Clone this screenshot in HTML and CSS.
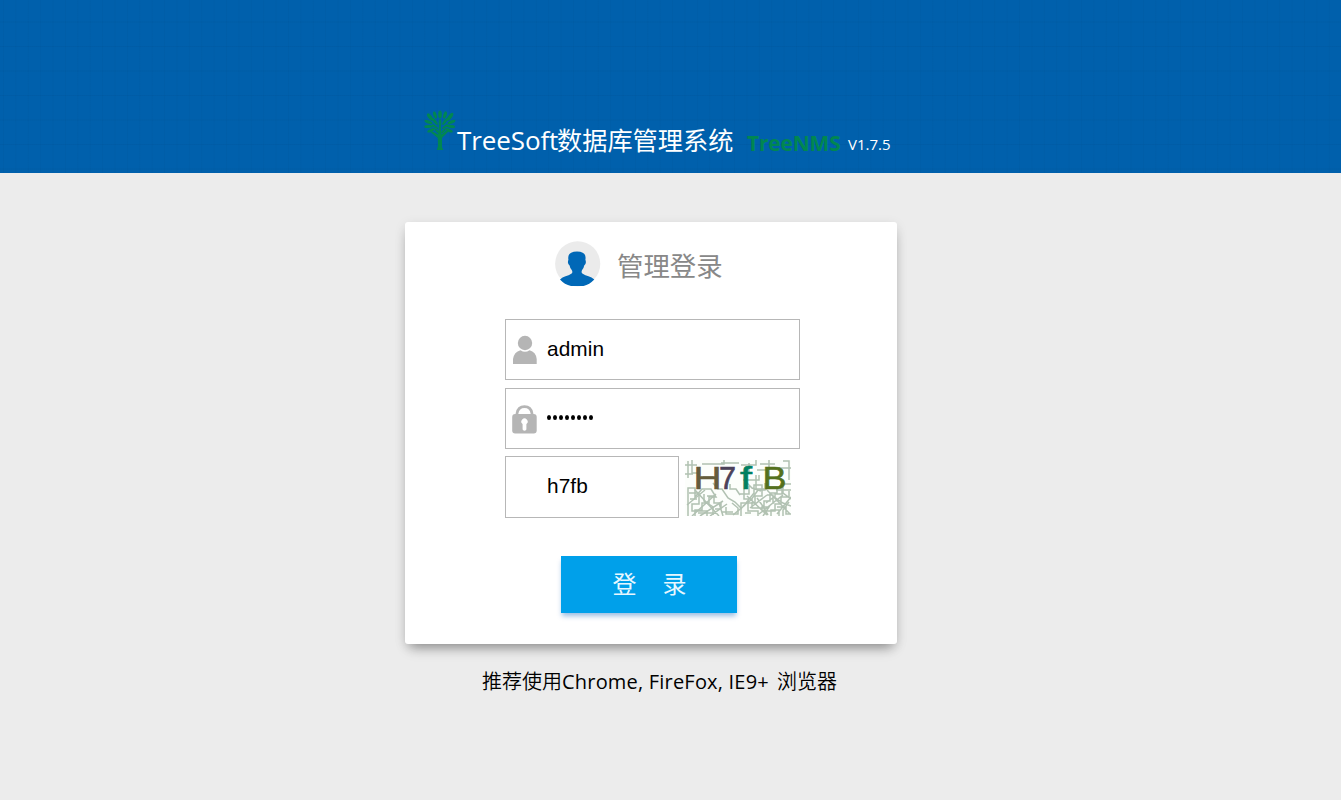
FILE: index.html
```html
<!DOCTYPE html>
<html lang="zh-CN">
<head>
<meta charset="utf-8">
<title>TreeSoft数据库管理系统</title>
<link rel="stylesheet" href="styles.css">
</head>
<body>
<header class="banner">
  <svg class="tree" viewBox="0 0 34 42" fill="#008751">
    <path d="M13.8 40 L15 36 L14.8 28 L8 22.5 L9 21.3 L15.2 24.5 L16 15 H17.8 L18.3 24.5 L24 20.3 L25.4 21.6 L19 28 L19 37 L20.2 40Z"/>
    <g>
      <ellipse cx="17" cy="4.5" rx="1.8" ry="4"/>
      <ellipse cx="12" cy="5" rx="1.6" ry="3.8" transform="rotate(-18 12 5)"/>
      <ellipse cx="22" cy="5" rx="1.6" ry="3.8" transform="rotate(18 22 5)"/>
      <ellipse cx="7" cy="7" rx="1.9" ry="4.4" transform="rotate(-35 7 7)"/>
      <ellipse cx="27" cy="6.8" rx="1.9" ry="4.8" transform="rotate(38 27 6.8)"/>
      <ellipse cx="5.5" cy="12" rx="1.5" ry="4.2" transform="rotate(-70 5.5 12)"/>
      <ellipse cx="28.5" cy="12" rx="1.5" ry="4.2" transform="rotate(68 28.5 12)"/>
      <ellipse cx="5.5" cy="16.5" rx="1.5" ry="4.3" transform="rotate(88 5.5 16.5)"/>
      <ellipse cx="28" cy="16.5" rx="1.5" ry="4.3" transform="rotate(-82 28 16.5)"/>
      <ellipse cx="8" cy="20.3" rx="1.5" ry="4" transform="rotate(65 8 20.3)"/>
      <ellipse cx="26" cy="20.3" rx="1.5" ry="4" transform="rotate(-65 26 20.3)"/>
      <ellipse cx="12" cy="11.5" rx="1.4" ry="4.2" transform="rotate(-35 12 11.5)"/>
      <ellipse cx="22" cy="11.5" rx="1.4" ry="4.2" transform="rotate(35 22 11.5)"/>
      <ellipse cx="17" cy="13" rx="1.3" ry="4"/>
      <ellipse cx="12" cy="16.7" rx="1.1" ry="3.6" transform="rotate(-55 12 16.7)"/>
      <ellipse cx="22" cy="16.7" rx="1.1" ry="3.6" transform="rotate(55 22 16.7)"/>
      <ellipse cx="14" cy="21" rx="1.1" ry="3" transform="rotate(-45 14 21)"/>
      <ellipse cx="20.4" cy="21" rx="1.1" ry="3" transform="rotate(45 20.4 21)"/>
    </g>
  </svg>
  <h1 class="title"><span class="title-latin">TreeSoft</span><span class="title-cjk">数据库管理系统</span></h1>
  <span class="product">TreeNMS</span>
  <span class="version">V1.7.5</span>
</header>
<main class="page">
  <form class="card">
    <div class="heading">
      <svg class="avatar" viewBox="0 0 46 46">
        <circle cx="22.7" cy="22.8" r="22.6" fill="#ebebeb"/>
        <path d="M5 38.4 C8 35.6 13 35 16.3 32.8 Q18.4 31.4 16.4 28.6 Q15 27 14.6 24.6 Q12 22.4 13.4 18.8 Q12 10.4 22 10.4 Q31.8 10.4 30.4 18.8 Q31.8 22.4 29.2 24.6 Q28.8 27 27.4 28.6 Q25.6 31.4 27.7 32.8 C31 35 36 35.6 39.3 38.4 Q34.5 43.4 28.5 45 H16 Q9.5 43.4 5 38.4Z" fill="#0068b7"/>
      </svg>
      <h2 class="heading-text">管理登录</h2>
    </div>
    <label class="field">
      <svg class="field-icon" viewBox="0 0 26 30" fill="#b5b5b5">
        <circle cx="13" cy="8" r="7.2"/>
        <path d="M1 29 V24 Q2 17 8.5 15.2 Q13 18.2 17.5 15.2 Q24 17 24.7 24 V29Z"/>
      </svg>
      <input class="input" type="text" value="admin">
    </label>
    <label class="field">
      <svg class="field-icon" viewBox="0 0 26 30">
        <path d="M5 12 V9.5 Q6 2.6 12.5 2.6 Q19 2.6 20 9.5 V12" fill="none" stroke="#b5b5b5" stroke-width="2.7"/>
        <rect x="0.2" y="10" width="24.5" height="19.5" rx="3" fill="#b5b5b5"/>
        <path d="M10.6 20 A3.1 3.1 0 1 1 14.4 20 V25.5 Q12.5 28 10.6 25.5Z" fill="#fff"/>
      </svg>
      <span class="dots"><i></i><i></i><i></i><i></i><i></i><i></i><i></i><i></i></span>
    </label>
    <div class="code-row">
      <label class="field field-code"><input class="input" type="text" value="h7fb"></label>
      <svg class="captcha" viewBox="0 0 106 56">
        <rect width="106" height="56" fill="#fcfefb"/>
        <g class="noise">
          <path d="M0 5H12M3 1V18M7 0V13H14M0 14H8M18 17H28M17 4H39V0M36 3H54M56 5H71V0M72 10H84V20M84 0V14M75 4H90M98 1H104V20M94 8H106M95 24H106M58 20H74V15M71 15V29H82M64 3V14"/>
          <path d="M3 56V28H10V37L17 29H26L31 37H24V43H17V50H10V56M4 33H14V44H7V51H22V56M5 39H12M19 34V41L28 47V55M22 36H29V43H36V49H30M34 43L38 56M41 47V54H53V48L47 43M13 53H30M37 52H48"/>
          <path d="M28 23L33 29H37L43 38L50 42L57 49M45 24V29H51L55 35M2 45L20 30M7 56L31 34M15 56L38 41M25 56L42 44M10 30L34 56M48 55L60 45"/>
          <path d="M56 56V43H61L69 33V25H77V36H70V43H63V51H73V56M55 34H64V26M59 29V39H67V48H79V41H85V33H92V26M58 46L66 40L73 30H80V23M78 56L84 47H77V51H90V44H96V37H104V31M82 35H88V44M86 56V50H94V56M92 47H101V54H106M83 27H97V34H90V39M98 24V33L106 39M81 43L89 37L98 43L106 46M72 38L77 45L83 55M98 56V50L104 42M66 53H60M91 30H106M61 22L67 28L76 31M62 36L82 55M82 30L105 54M74 54L98 35M92 54L106 37M65 48L82 35"/>
        </g>
        <g class="captcha-text">
          <text x="8.5" y="29" fill="#645c3b" stroke="#645c3b" textLength="28" lengthAdjust="spacingAndGlyphs">H</text>
          <text x="34" y="29" fill="#4b4259" stroke="#4b4259" textLength="17" lengthAdjust="spacingAndGlyphs">7</text>
          <text x="55" y="29" fill="#008060" stroke="#008060" textLength="12" lengthAdjust="spacingAndGlyphs">f</text>
          <text x="77.5" y="29" fill="#54711c" stroke="#54711c" textLength="24" lengthAdjust="spacingAndGlyphs">B</text>
        </g>
      </svg>
    </div>
    <button class="submit" type="button"><span>登</span><span>录</span></button>
  </form>
  <p class="hint"><span class="hint-cjk">推荐使用</span><span class="hint-latin">Chrome, FireFox, IE9+</span><span class="hint-cjk">浏览器</span></p>
</main>
</body>
</html>
```

FILE: styles.css
```css
* { box-sizing: border-box; }
body {
  margin: 0;
  height: 800px;
  overflow: hidden;
  background: #ececec;
  font-family: "Open Sans", "Noto Sans CJK SC", sans-serif;
}
.banner {
  height: 173px;
  padding: 110px 0 0 423px;
  display: flex;
  align-items: flex-start;
  color: #fff;
  background-color: #0060ac;
  background-image:
    linear-gradient(rgba(0, 60, 110, .09) 1px, transparent 1px),
    linear-gradient(90deg, rgba(0, 60, 110, .06) 1px, transparent 1px);
  background-size: 25px 24.5px, 12.4px 12.4px;
  background-position: 3px -3px;
}
.tree { width: 34px; height: 42px; flex: none; }
.title {
  margin: 12px 0 0;
  display: flex;
  font-size: 26px;
  line-height: 36px;
  font-weight: 400;
  white-space: nowrap;
}
.title-latin { width: 100px; letter-spacing: -.1px; }
.title-cjk { width: 176px; font-size: 25.2px; }
.product {
  width: 101px;
  margin: 19px 0 0 14px;
  font-size: 21px;
  line-height: 28px;
  font-weight: 700;
  letter-spacing: -.2px;
  color: #008751;
}
.version { margin-top: 23px; font-size: 15px; line-height: 22px; }
.page { display: flex; flex-direction: column; align-items: flex-start; padding: 49px 0 0 405px; }
.card {
  width: 492px;
  height: 422px;
  padding: 19px 0 0 100px;
  display: flex;
  flex-direction: column;
  align-items: flex-start;
  background: #fff;
  border-radius: 3px;
  box-shadow: 0 8px 12px -5px rgba(0, 0, 0, .38), 0 3px 12px rgba(0, 0, 0, .1);
}
.heading { height: 78px; display: flex; padding-left: 50px; }
.avatar { width: 46px; height: 46px; }
.heading-text {
  margin: 7px 0 0 16px;
  font-size: 26.4px;
  line-height: 36px;
  font-weight: 400;
  color: #888;
}
.field {
  width: 295px;
  height: 61px;
  margin-bottom: 8px;
  padding-left: 6px;
  display: flex;
  align-items: center;
  border: 1px solid #b7b7b7;
}
.field-icon { width: 26px; height: 30px; flex: none; }
.input {
  width: 200px;
  margin: 0 0 2px 9px;
  padding: 0;
  border: 0;
  outline: 0;
  background: none;
  color: #000;
  font: 20.8px/26px "Liberation Sans", Arial, sans-serif;
  letter-spacing: .1px;
}
.dots { display: flex; gap: 2px; margin: 0 0 3px 9px; }
.dots i { width: 4px; height: 5px; border-radius: 50%; background: #000; }
.code-row { display: flex; gap: 6px; height: 62px; margin-top: -1px; }
.field-code { width: 174px; height: 62px; padding-left: 32px; }
.field-code .input { width: 120px; }
.captcha { width: 106px; height: 56px; margin-top: 4px; }
.noise { fill: none; stroke: #9fb3a0; stroke-width: 1.5; opacity: .8; }
.captcha-text { font: 400 32px "Liberation Sans", Arial, sans-serif; stroke-width: .6px; }
.submit {
  width: 176px;
  height: 57px;
  margin: 38px 0 0 56px;
  padding: 0 0 4px 1px;
  display: flex;
  align-items: center;
  justify-content: center;
  gap: 26px;
  border: 0;
  background: #00a0ea;
  color: #e8f7ff;
  font: 24px/34px "Noto Sans CJK SC", sans-serif;
  box-shadow: 0 4px 5px -1px rgba(0, 90, 180, .4);
}
.hint {
  margin: 23px 0 0 77px;
  display: flex;
  font-size: 20px;
  line-height: 30px;
  color: #000;
  white-space: nowrap;
}
.hint-latin { width: 215px; letter-spacing: .2px; }
.hint-cjk { font-weight: 350; }
```
